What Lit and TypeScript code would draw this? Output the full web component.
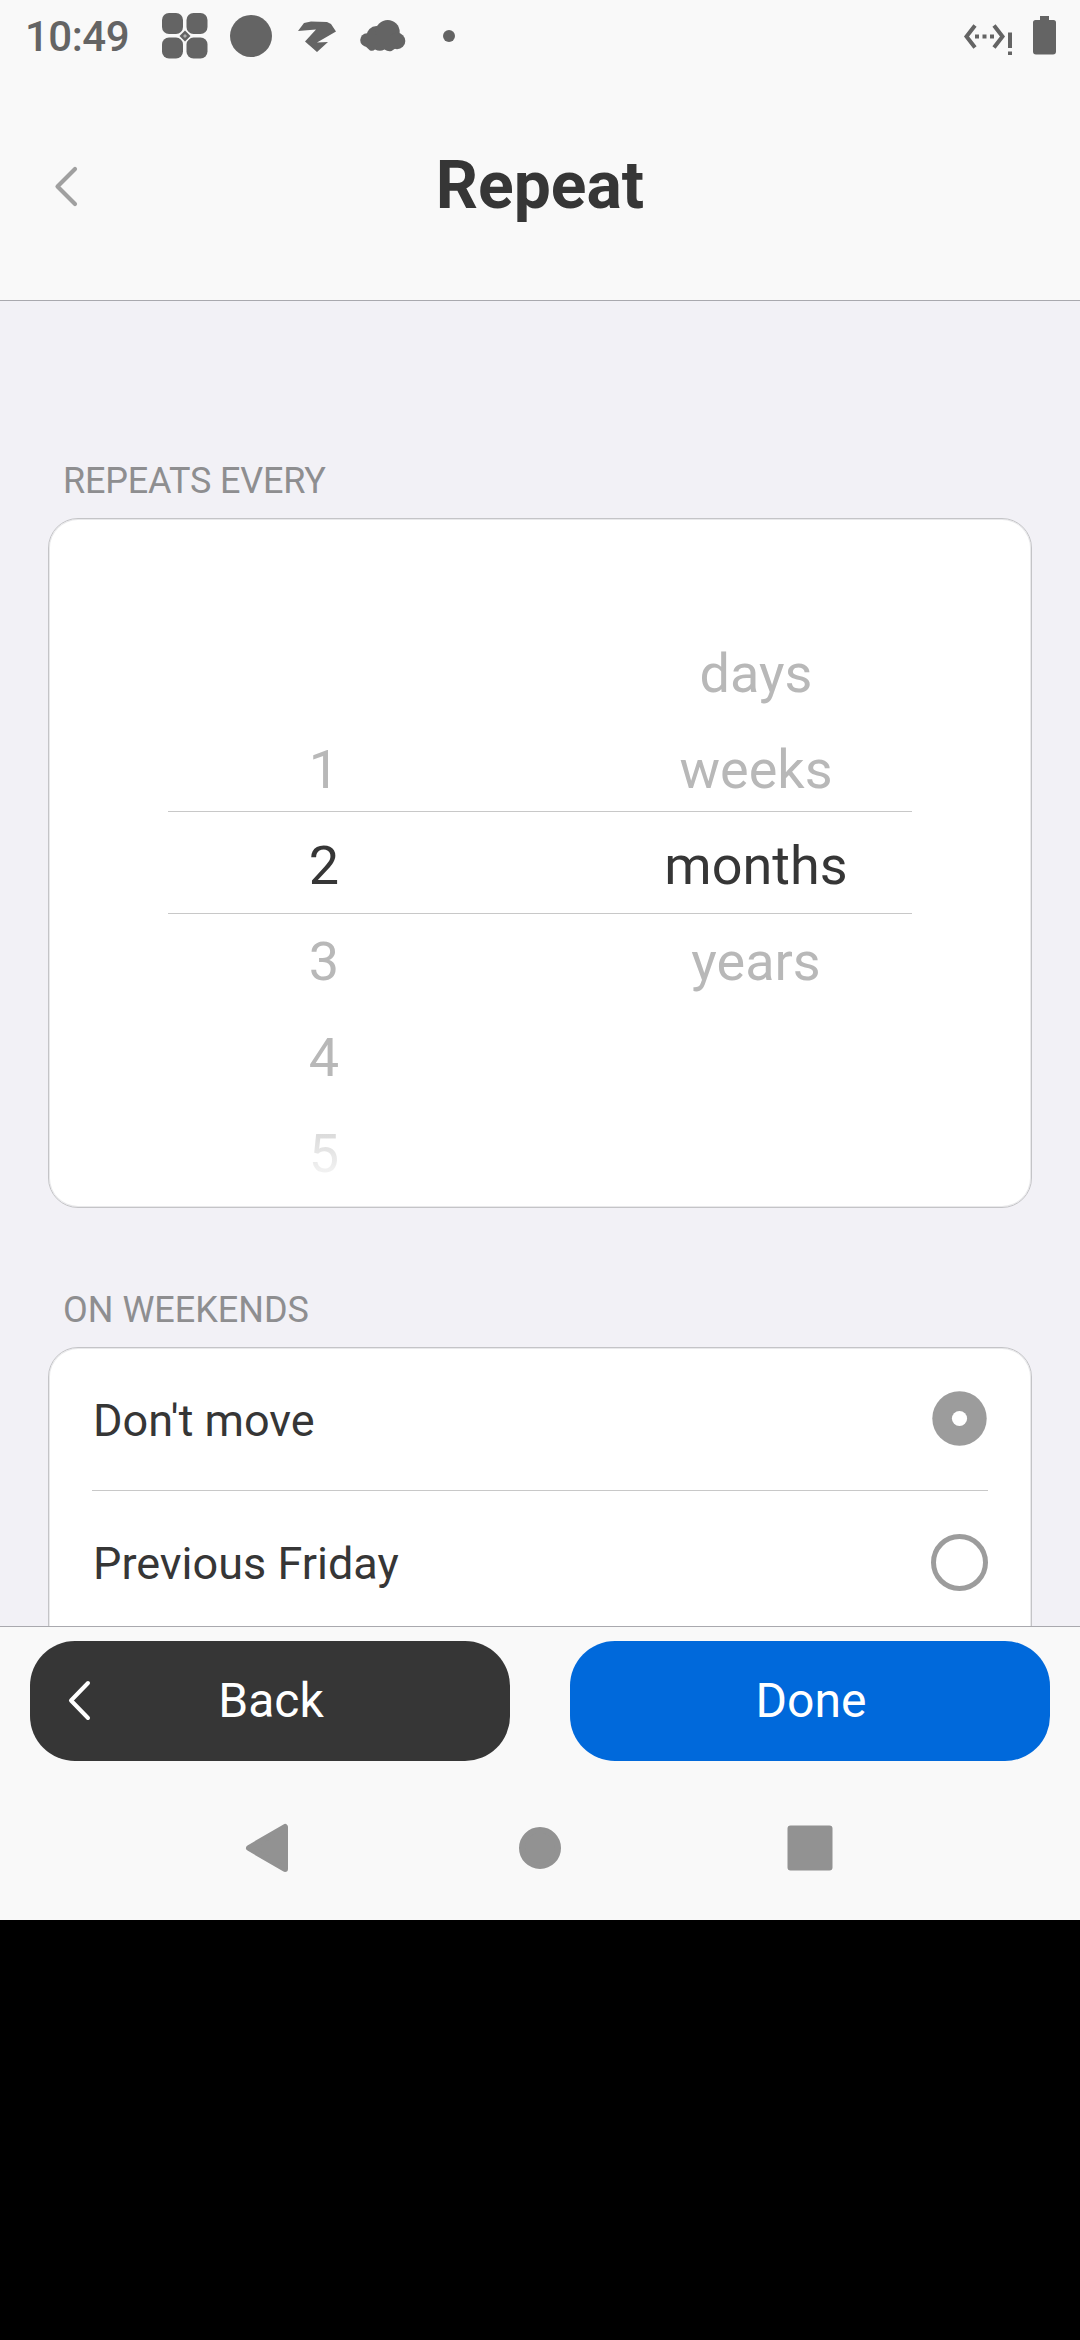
import { LitElement, html, css, svg } from "lit";
import { customElement, property } from "lit/decorators.js";
import { classMap } from "lit/directives/class-map.js";

@customElement("status-bar")
class StatusBar extends LitElement {
  static styles = css`
    :host { display: flex; align-items: center; height: 72px; padding: 0 20px 0 25px; box-sizing: border-box; color: #646464; }
    .clock { font-size: 42px; line-height: 50px; font-weight: 500; width: 136px; padding-top: 2px; letter-spacing: -0.5px; white-space: nowrap; }
    .icons { display: block; width: 300px; height: 72px; fill: #646464; }
    .spacer { flex: 1; }
    .system { display: block; width: 100px; height: 72px; fill: #646464; }
    .stroke { fill: none; stroke: #646464; stroke-width: 4; }
  `;
  render() {
    return html`
      <div class="clock">10:49</div>
      <svg class="icons" viewBox="161 0 300 72">
        <rect x="162" y="13" width="21" height="21" rx="7" />
        <rect x="186.500" y="13" width="21" height="21" rx="7" />
        <rect x="162" y="37.500" width="21" height="21" rx="7" />
        <rect x="186.500" y="37.500" width="21" height="21" rx="7" />
        <path d="M185 28.500L192.500 36L185 43.500L177.500 36Z" fill="#f9f9f9" />
        <path d="M185 30.500L190.500 36L185 41.500L179.500 36Z" />
        <path d="M185 34L187 36L185 38L183 36Z" fill="#b0b0b0" />
        <circle cx="251" cy="36" r="21" />
        <path d="M304 23L311 21.500L327 22L331 24L336 31.500L317 42.500L328 42L317 52L305 41.500L316 29.500L298 31Z" />
        <circle cx="367" cy="40" r="6.800" />
        <circle cx="376.500" cy="36" r="10" />
        <circle cx="387.700" cy="32" r="12" />
        <circle cx="397" cy="41" r="8.300" />
        <path d="M363 44L370 50.500Q373 51.500 375 49.500Q380 52 384.500 49.500Q388 52 391.500 51L399 46L396 36H370Z" />
        <circle cx="449" cy="36" r="6" />
      </svg>
      <div class="spacer"></div>
      <svg class="system" viewBox="960 0 100 72">
        <path class="stroke" d="M975 25.500L966.500 36.500L975 47.500M994 25.500L1002.500 36.500L994 47.500" />
        <path d="M975 34.500h4v4h-4zM982.500 34.500h4v4h-4zM990 34.500h4v4h-4zM1008 32.500h4v15.500h-4zM1008 51.500h4v3.500h-4z" />
        <path d="M1040 16h9v4h4.500q2.500 0 2.500 2.500v29q0 3-3 3h-17q-3 0-3-3v-29q0-2.500 2.500-2.500h4.500z" />
      </svg>
    `;
  }
}

@customElement("title-bar")
class TitleBar extends LitElement {
  @property() heading = "";
  static styles = css`
    :host { display: grid; grid-template-columns: 132px 1fr 132px; align-items: center; height: 229px; box-sizing: border-box; border-bottom: 1px solid #a9a9ae; }
    .back { display: block; width: 132px; height: 228px; fill: none; stroke: #a0a0a0; stroke-width: 4.200; stroke-linecap: round; stroke-linejoin: round; }
    .heading { margin: 0; text-align: center; font-size: 66px; line-height: 78px; font-weight: 700; color: #363636; }
  `;
  render() {
    return html`
      <svg class="back" viewBox="0 72 132 228"><path d="M75 169L57.500 186.500L75 204" /></svg>
      <h1 class="heading">${this.heading}</h1>
    `;
  }
}

@customElement("wheel-column")
class WheelColumn extends LitElement {
  @property({ attribute: false }) items: string[] = [];
  @property({ type: Number }) selected = 0;
  static styles = css`
    :host { display: flex; flex-direction: column; width: 312px; }
    .item { height: 96px; line-height: 96px; text-align: center; font-size: 54px; color: #b8b8b8; }
    .active { color: #363636; }
    .fading { background: linear-gradient(#dadada 27%, #f3f3f3 72%); -webkit-background-clip: text; background-clip: text; color: transparent; }
  `;
  render() {
    return this.items.map((t, i) => html`<div class=${classMap({
      item: true, active: i === this.selected, fading: i === this.selected + 3,
    })}>${t || "\u00a0"}</div>`);
  }
}

@customElement("radio-mark")
class RadioMark extends LitElement {
  @property({ type: Boolean }) checked = false;
  static styles = css`
    :host { display: block; width: 57px; height: 57px; }
    .mark { display: block; }
    .disc { fill: #9c9c9c; }
    .hole { fill: #fff; }
    .ring { fill: none; stroke: #9c9c9c; stroke-width: 5; }
  `;
  render() {
    return html`<svg class="mark" width="57" height="57" viewBox="0 0 57 57">
      ${this.checked
        ? svg`<circle class="disc" cx="28.500" cy="28.500" r="27.200" /><circle class="hole" cx="28.500" cy="28.500" r="7.600" />`
        : svg`<circle class="ring" cx="28.500" cy="28.500" r="26" />`}
    </svg>`;
  }
}

@customElement("app-root")
class AppRoot extends LitElement {
  static styles = css`
    :host { display: flex; flex-direction: column; height: 2340px; background: #000; font-family: Roboto, "Liberation Sans", sans-serif; color: #363636; overflow: hidden; }
    .screen { display: flex; flex-direction: column; height: 1920px; background: #f9f9f9; }
    .content { flex: 1; min-height: 0; overflow: hidden; background: #f2f1f6; padding: 158px 48px 0; box-sizing: border-box; }
    .label { font-size: 36px; line-height: 44px; color: #8e8e90; padding-left: 15px; margin-bottom: 15px; }
    .tight { letter-spacing: -0.2px; }
    .card { background: #fff; border: 1px solid #c4c4c7; box-shadow: inset 0 0 0 1px #e9e9eb; border-radius: 30px; box-sizing: border-box; }
    .picker { height: 690px; display: grid; place-items: center; margin-bottom: 80px; }
    .wheel { grid-area: 1 / 1; display: flex; justify-content: space-between; width: 744px; margin-top: 6px; }
    .band { grid-area: 1 / 1; width: 744px; height: 103px; box-sizing: border-box; border-top: 1px solid #c8c8c8; border-bottom: 1px solid #c8c8c8; margin-top: -1px; }
    .options { padding: 0 43px; height: 434px; }
    .option { display: flex; align-items: center; justify-content: space-between; height: 144px; box-sizing: border-box; border-bottom: 1px solid #c8c8c8; font-size: 45px; padding: 0 0 1px 1px; }
    .option:first-child { height: 143px; }
    .text { padding-top: 3px; }
    .actions { display: grid; grid-template-columns: 480px 480px; justify-content: space-between; padding: 14px 30px 0; height: 168px; box-sizing: border-box; border-top: 1px solid #a9a9ae; }
    .button { display: grid; grid-template-columns: 100px 1fr 100px; align-items: center; height: 120px; border: 0; padding: 0; border-radius: 45px; font: 400 48px/56px Roboto, "Liberation Sans", sans-serif; color: #fff; text-align: center; }
    .dark { background: #363636; }
    .primary { background: #0069db; }
    .chevron { display: block; width: 100px; height: 120px; fill: none; stroke: #fff; stroke-width: 4; stroke-linecap: round; stroke-linejoin: round; }
    .caption { grid-column: 2; padding-left: 2px; }
    .navigation { display: block; width: 1080px; height: 126px; fill: #929292; stroke: #929292; stroke-width: 6; stroke-linejoin: round; }
  `;
  render() {
    return html`
      <div class="screen">
        <status-bar></status-bar>
        <title-bar heading="Repeat"></title-bar>
        <main class="content">
          <div class="label tight">REPEATS EVERY</div>
          <section class="card picker">
            <div class="band"></div>
            <div class="wheel">
              <wheel-column .items=${["", "", "1", "2", "3", "4", "5"]} .selected=${3}></wheel-column>
              <wheel-column .items=${["", "days", "weeks", "months", "years", "", ""]} .selected=${3}></wheel-column>
            </div>
          </section>
          <div class="label">ON WEEKENDS</div>
          <section class="card options">
            <div class="option"><span class="text">Don't move</span><radio-mark checked></radio-mark></div>
            <div class="option"><span class="text">Previous Friday</span><radio-mark></radio-mark></div>
          </section>
        </main>
        <footer class="actions">
          <button class="button dark">
            <svg class="chevron" viewBox="0 0 100 120"><path d="M58 42L41 59.500L58 77" /></svg>
            <span class="caption">Back</span>
          </button>
          <button class="button primary"><span class="caption">Done</span></button>
        </footer>
        <svg class="navigation" viewBox="0 1794 1080 126">
          <path d="M249 1848L285 1827V1869Z" />
          <circle cx="540" cy="1848" r="18" />
          <rect x="790.500" y="1828.500" width="39" height="39" />
        </svg>
      </div>
    `;
  }
}
